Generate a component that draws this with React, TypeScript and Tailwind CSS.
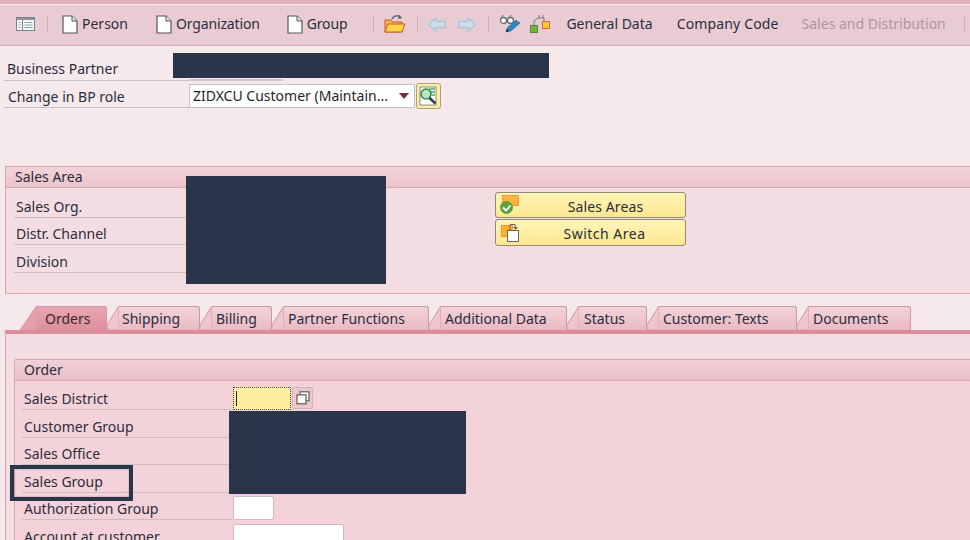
import type { ReactNode } from "react";

function PageIcon() {
  return (
    <svg width="16" height="19" viewBox="0 0 16 19" className="shrink-0">
      <path d="M1 1h9l5 5v12H1z" fill="#fff" stroke="#55555c" strokeWidth="1.2" />
      <path d="M10 1v5h5" fill="#eee" stroke="#55555c" strokeWidth="1" />
    </svg>
  );
}

function Sep({ ml }: { ml: string }) {
  return <div className={`h-[16px] w-[1px] bg-[#dcaab4] shrink-0 ${ml}`} />;
}

function TableIcon() {
  return (
    <svg width="19" height="14" viewBox="0 0 19 14" className="shrink-0">
      <rect x="0.5" y="0.5" width="18" height="13" fill="#f5f8fa" stroke="#78808a" />
      <rect x="1" y="1" width="17" height="2" fill="#8d96a0" />
      <path d="M6.5 3v10" stroke="#78808a" />
      <path d="M2.5 5.5h2M2.5 8h2M2.5 10.5h2M8.5 5.5h8M8.5 8h8M8.5 10.5h8" stroke="#8aa0b4" />
    </svg>
  );
}

function FolderIcon() {
  return (
    <svg width="22" height="20" viewBox="0 0 22 20" className="shrink-0">
      <path d="M8 5c2-4 7-4 9-1" fill="none" stroke="#666" strokeWidth="1.5" />
      <path d="M15 1l3 3-4 1z" fill="#666" />
      <path d="M1 18V6h6l1.5 2H18v10z" fill="#f6b73c" stroke="#d0562a" />
      <path d="M1 18l3-8h17l-3 8z" fill="#fdd545" stroke="#d0562a" />
    </svg>
  );
}

function ArrowIcon({ flip }: { flip?: boolean }) {
  return (
    <svg width="18" height="15" viewBox="0 0 18 15" className={flip ? "shrink-0 -scale-x-100" : "shrink-0"}>
      <path d="M1 7.5L8 1v3.5h9v6H8V14z" fill="#cfdfe8" stroke="#a3c6dc" strokeWidth="1.4" />
    </svg>
  );
}

function GlassesPenIcon() {
  return (
    <svg width="22" height="20" viewBox="0 0 22 20" className="shrink-0">
      <circle cx="4.5" cy="6.5" r="3" fill="#fff" stroke="#6a6a6a" strokeWidth="1.3" />
      <circle cx="11.5" cy="6.5" r="3" fill="#fff" stroke="#6a6a6a" strokeWidth="1.3" />
      <path d="M7.5 6h1M2 4l2-3M10 4l2-3" stroke="#6a6a6a" fill="none" />
      <path d="M7 18l1-4 9-8 4 3-9 8z" fill="#2f86bd" stroke="#2a6e9e" strokeWidth="0.6" />
      <path d="M7 18l1-3 2 2z" fill="#123" />
    </svg>
  );
}

function HierarchyIcon() {
  return (
    <svg width="20" height="20" viewBox="0 0 20 20" className="shrink-0">
      <path d="M4 12V7l4-3h6v3" fill="none" stroke="#7a7a7a" />
      <path d="M9 1v3M13 1v3" stroke="#7a7a7a" />
      <rect x="0.5" y="11.5" width="7" height="7" fill="#77b23f" stroke="#4f8a2c" />
      <rect x="12.5" y="7.5" width="7" height="7" fill="#fdc92f" stroke="#e06a30" />
    </svg>
  );
}

function InspectIcon() {
  return (
    <svg width="19" height="20" viewBox="0 0 19 20">
      <rect x="1" y="1" width="16" height="18" fill="#fff" stroke="#8a8a7a" />
      <path d="M10 3h6M12 6h4M13 9h3" stroke="#58a55c" strokeWidth="1.4" />
      <circle cx="7" cy="8" r="5" fill="#b8e6bf" stroke="#2f8a4a" strokeWidth="1.6" />
      <path d="M10.5 12l6 5.5" stroke="#3a3a3a" strokeWidth="2.6" />
    </svg>
  );
}

function SalesAreasIcon() {
  return (
    <svg width="20" height="21" viewBox="0 0 20 21">
      <rect x="2.5" y="1.5" width="16" height="10" fill="#f9b43a" stroke="#f07d2e" strokeDasharray="2 1" />
      <circle cx="6.5" cy="13.5" r="6.5" fill="#5da13c" />
      <path d="M3 13.5l3 3 4.5-5" fill="none" stroke="#fff" strokeWidth="1.8" />
    </svg>
  );
}

function SwitchAreaIcon() {
  return (
    <svg width="20" height="21" viewBox="0 0 20 21">
      <rect x="1.5" y="3.5" width="11" height="11" fill="#fbb030" stroke="#f39a26" />
      <rect x="7.5" y="8.5" width="11" height="11" fill="#fff" stroke="#666" />
      <path d="M10 8V2.5h5V6" fill="none" stroke="#666" />
      <path d="M13 5h5l-2.5 3z" fill="#666" />
    </svg>
  );
}

function F4Icon() {
  return (
    <svg width="14" height="14" viewBox="0 0 14 14">
      <rect x="4" y="0.8" width="9" height="9" fill="#fff" stroke="#666" strokeWidth="1.3" />
      <rect x="1" y="3.8" width="9" height="9" fill="#fff" stroke="#666" strokeWidth="1.3" />
    </svg>
  );
}

function Row({ label, w, children }: { label: string; w: string; children?: ReactNode }) {
  return (
    <div className="flex h-[27.5px] items-end">
      <div className={`h-full ${w} border-b border-[#cdbcc0] flex items-center pl-[2px] pt-[7px] shrink-0`}>{label}</div>
      {children}
    </div>
  );
}

function Tab({ label, w, pl, active }: { label: string; w: string; pl: string; active?: boolean }) {
  return (
    <div className="flex h-[24px] items-stretch -ml-[1px]">
      {active ? (
        <svg width="17" height="24" viewBox="0 0 17 24" className="shrink-0">
          <path d="M0 24L15 2Q16 .5 17 .5V24z" fill="#e6a0ac" stroke="#d08a96" strokeWidth="0.6" />
        </svg>
      ) : (
        <svg width="13" height="24" viewBox="0 0 13 24" className="shrink-0">
          <path d="M1 24V19L11 3Q12 .5 13 .5V24z" fill="#efc6ce" stroke="#cf9aa6" />
        </svg>
      )}
      <div
        className={`${w} ${pl} flex items-center border-t border-r border-[#cf97a3] rounded-tr-[3px] pt-[1px] ${
          active ? "bg-gradient-to-b from-[#e8a6b1] to-[#de8f9d] text-[#3a2730]" : "bg-gradient-to-b from-[#f2d3d9] to-[#eab9c3]"
        }`}
      >
        {label}
      </div>
    </div>
  );
}

export default function App() {
  return (
    <div className="relative w-[970px] h-[540px] overflow-hidden bg-[#f5e9ec] text-[14px] leading-[18px] text-[#2c2c3c] font-['Noto_Sans','Liberation_Sans',sans-serif]">
      {/* toolbar */}
      <div className="h-[4px] bg-[#e2b2bb]" />
      <div className="h-[42px] border-t border-[#f6e6ea] border-b border-b-[#d8adb6] bg-[#e9ccd3] flex items-center pb-[2px]">
        <div className="ml-[16px]"><TableIcon /></div>
        <Sep ml="ml-[12px]" />
        <div className="ml-[14px]"><PageIcon /></div>
        <span className="ml-[4px]">Person</span>
        <div className="ml-[28px]"><PageIcon /></div>
        <span className="ml-[4px] tracking-[-0.15px]">Organization</span>
        <div className="ml-[27px]"><PageIcon /></div>
        <span className="ml-[4px] tracking-[-0.15px]">Group</span>
        <Sep ml="ml-[26px]" />
        <div className="ml-[10px]"><FolderIcon /></div>
        <Sep ml="ml-[11px]" />
        <div className="ml-[10px]"><ArrowIcon /></div>
        <div className="ml-[12px]"><ArrowIcon flip /></div>
        <Sep ml="ml-[12px]" />
        <div className="ml-[10px]"><GlassesPenIcon /></div>
        <div className="ml-[9px]"><HierarchyIcon /></div>
        <span className="ml-[16px]">General Data</span>
        <span className="ml-[24px] tracking-[0.15px]">Company Code</span>
        <span className="ml-[23px] text-[#a8989e]">Sales and Distribution</span>
        <Sep ml="ml-[18px]" />
      </div>

      {/* header fields */}
      <div className="mt-[9px] pl-[4px]">
        <div className="flex h-[26px]">
          <div className="w-[185px] border-b border-[#cdbcc0] flex items-center pl-[3px] pt-[2px]">Business Partner</div>
          <div className="w-[94px] border-b-2 border-[#cfc4c7]" />
        </div>
        <div className="flex h-[27px]">
          <div className="w-[185px] border-b border-[#cdbcc0] flex items-center pl-[4px] pt-[6px]">Change in BP role</div>
          <div className="mt-[3px] w-[226px] h-[24px] bg-white border border-[#c9bfc2] flex items-center pl-[3px] pr-[5px] justify-between text-[#1f1f2a]">
            <span>ZIDXCU Customer (Maintain...</span>
            <div className="w-0 h-0 border-x-[5px] border-x-transparent border-t-[6px] border-t-[#7a2a3a]" />
          </div>
          <div className="mt-[2px] ml-[1px] w-[25px] h-[26px] rounded-[3px] border border-[#a5a283] bg-[#fbeda8] flex items-center justify-center">
            <InspectIcon />
          </div>
        </div>
      </div>

      {/* sales area */}
      <div className="mt-[58px] ml-[5px] w-[970px] h-[128px] border border-[#dba5b0] bg-[#f4dde2]">
        <div className="h-[21px] border-b border-[#dba5b0] bg-gradient-to-b from-[#f2d3d9] to-[#ecc4cc] pl-[9px] flex items-center">Sales Area</div>
        <div className="relative pl-[8px] pt-[2px]">
          <Row label="Sales Org." w="w-[173px]" />
          <Row label="Distr. Channel" w="w-[173px]" />
          <Row label="Division" w="w-[173px]" />
          <div className="absolute left-[489px] top-[4px] flex flex-col gap-[1px]">
            <div className="relative w-[191px] h-[26px] rounded-[3px] border border-[#8f8c78] bg-gradient-to-b from-[#fff4b8] to-[#fde88f] flex items-center justify-center pl-[30px] pt-[3px]">
              <span className="tracking-[0.1px]">Sales Areas</span>
              <div className="absolute left-[4px] top-[1px]"><SalesAreasIcon /></div>
            </div>
            <div className="relative w-[191px] h-[27px] rounded-[3px] border border-[#8f8c78] bg-gradient-to-b from-[#fff4b8] to-[#fde88f] flex items-center justify-center pl-[28px] pt-[3px]">
              <span className="tracking-[0.5px]">Switch Area</span>
              <div className="absolute left-[4px] top-[2px]"><SwitchAreaIcon /></div>
            </div>
          </div>
        </div>
      </div>

      {/* tabs */}
      <div className="mt-[12px] ml-[21px] flex">
        <Tab label="Orders" w="w-[70px]" pl="pl-[8px]" active />
        <Tab label="Shipping" w="w-[81px]" pl="pl-[3px]" />
        <Tab label="Billing" w="w-[60px]" pl="pl-[4px]" />
        <Tab label="Partner Functions" w="w-[145px]" pl="pl-[4px]" />
        <Tab label="Additional Data" w="w-[126px]" pl="pl-[4px]" />
        <Tab label="Status" w="w-[68px]" pl="pl-[5px]" />
        <Tab label="Customer: Texts" w="w-[138px]" pl="pl-[4px]" />
        <Tab label="Documents" w="w-[102px]" pl="pl-[4px]" />
      </div>

      {/* tab content */}
      <div className="ml-[5px] w-[970px] h-[240px] border-l border-[#dba5b0] border-t-[4px] border-t-[#d98e9c] bg-[#f4dde2] pt-[25px] pl-[8px]">
        <div className="h-[200px] border border-[#dba5b0] bg-[#f4d2d9] rounded-tl-[2px]">
          <div className="h-[21px] border-b border-[#dba5b0] bg-gradient-to-b from-[#f1d0d7] to-[#e9bfc8] pl-[9px] flex items-center">Order</div>
          <div className="pl-[7px] pt-[1.5px]">
            <Row label="Sales District" w="w-[210px]">
              <div className="ml-[1px] w-[58px] h-[23px] bg-[#fdee9f] border border-dotted border-[#444] pl-[2px] py-[3px]">
                <div className="w-[1px] h-full bg-[#223]" />
              </div>
              <div className="ml-[1px] mb-[1px] w-[21px] h-[22px] rounded-[2px] border border-[#d3b4bb] bg-[#eec6ce] flex items-center justify-center">
                <F4Icon />
              </div>
            </Row>
            <Row label="Customer Group" w="w-[210px]" />
            <Row label="Sales Office" w="w-[210px]" />
            <Row label="Sales Group" w="w-[210px]" />
            <Row label="Authorization Group" w="w-[210px]">
              <div className="ml-[1px] w-[41px] h-[24px] bg-white border border-[#cbbcc0] rounded-[2px]" />
            </Row>
            <Row label="Account at customer" w="w-[210px]">
              <div className="ml-[1px] w-[111px] h-[24px] bg-white border border-[#cbbcc0] rounded-[2px]" />
            </Row>
          </div>
        </div>
      </div>

      {/* redactions and annotation painted over the screenshot */}
      <div className="absolute left-[173px] top-[53px] w-[376px] h-[25px] bg-[#2b3549]" />
      <div className="absolute left-[186px] top-[176px] w-[200px] h-[108px] bg-[#2b3549]" />
      <div className="absolute left-[229px] top-[411px] w-[237px] h-[83px] bg-[#2b3549]" />
      <div className="absolute left-[10px] top-[465px] w-[123px] h-[36px] border-[4px] border-[#2b3549] shadow-[inset_0_0_2px_rgba(43,53,73,0.4)]" />
    </div>
  );
}
